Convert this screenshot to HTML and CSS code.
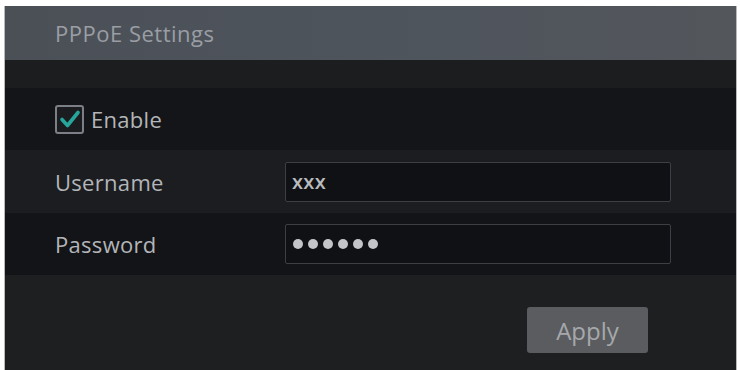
FILE: index.html
```html
<!DOCTYPE html>
<html>
<head>
<meta charset="utf-8">
<link rel="stylesheet" href="styles.css">
</head>
<body>
<div class="panel">
  <div class="header">PPPoE Settings</div>
  <div class="gap"></div>
  <div class="row row-dark">
    <label class="check">
      <span class="box"><svg viewBox="0 0 28 28" width="28" height="28"><path d="M6 14.5 L11.5 20.5 L22 7.5" fill="none" stroke="#27a59b" stroke-width="3.6" stroke-linecap="round" stroke-linejoin="round"/></svg></span>
      <span class="check-label">Enable</span>
    </label>
  </div>
  <div class="row row-light">
    <span class="label">Username</span>
    <div class="input"><span class="value">xxx</span></div>
  </div>
  <div class="row row-dark2">
    <span class="label">Password</span>
    <div class="input"><span class="dots"><i></i><i></i><i></i><i></i><i></i><i></i></span></div>
  </div>
  <div class="footer">
    <button class="apply">Apply</button>
  </div>
</div>
</body>
</html>
```
FILE: styles.css
```css
html, body {
  margin: 0;
  padding: 0;
  background: #ffffff;
  font-family: "Open Sans", "DejaVu Sans", sans-serif;
}
.panel {
  margin: 6px 3px 0 4px;
  height: 364px;
  border-left: 1px solid #b9b9b9;
  border-right: 1px solid #b9b9b9;
  background: #1e1f21;
  display: flex;
  flex-direction: column;
  overflow: hidden;
}
.header {
  height: 54px;
  flex: none;
  background: linear-gradient(90deg, #4b5057 0%, #4f555d 60%, #53565b 100%);
  color: #9a9ea4;
  font-size: 22px;
  display: flex;
  align-items: center;
  padding-left: 50px;
  letter-spacing: 0.5px;
}
.gap {
  height: 28px;
  flex: none;
  background: #1b1d1f;
}
.row {
  flex: none;
  display: flex;
  align-items: center;
  padding-left: 50px;
}
.row-dark { height: 62px; background: #141518; }
.row-light { height: 63px; background: #1c1d20; }
.row-dark2 { height: 62px; background: #131417; }
.check {
  display: flex;
  align-items: center;
  gap: 7px;
}
.box {
  width: 25px;
  height: 25px;
  border: 2px solid #7c7f85;
  border-radius: 3px;
  background: #1a1c20;
  display: flex;
  align-items: center;
  justify-content: center;
  overflow: visible;
}
.box svg { flex: none; }
.check-label, .label {
  color: #b3b5b9;
  font-size: 22px;
  letter-spacing: 0.3px;
}
.label {
  width: 230px;
  flex: none;
}
.input {
  width: 378px;
  height: 38px;
  border: 1px solid #3d3f44;
  border-radius: 2px;
  background: #101114;
  display: flex;
  align-items: center;
  padding-left: 6px;
  box-sizing: content-box;
}
.value {
  color: #b9bbbf;
  font-size: 20px;
  font-weight: 600;
  letter-spacing: 0.3px;
}
.dots {
  display: flex;
  gap: 5px;
  padding-left: 1px;
}
.dots i {
  display: block;
  width: 10px;
  height: 10px;
  border-radius: 50%;
  background: #c4c5c8;
}
.footer {
  flex: 1;
  display: flex;
  justify-content: flex-end;
  align-items: flex-start;
  padding-top: 32px;
  padding-right: 88px;
  background: #1e1f21;
}
.apply {
  width: 121px;
  height: 46px;
  border: none;
  border-radius: 3px;
  background: #5a5c5f;
  color: #a6a8ab;
  font-family: "Open Sans", "DejaVu Sans", sans-serif;
  font-size: 24px;
  padding: 0;
}
```
